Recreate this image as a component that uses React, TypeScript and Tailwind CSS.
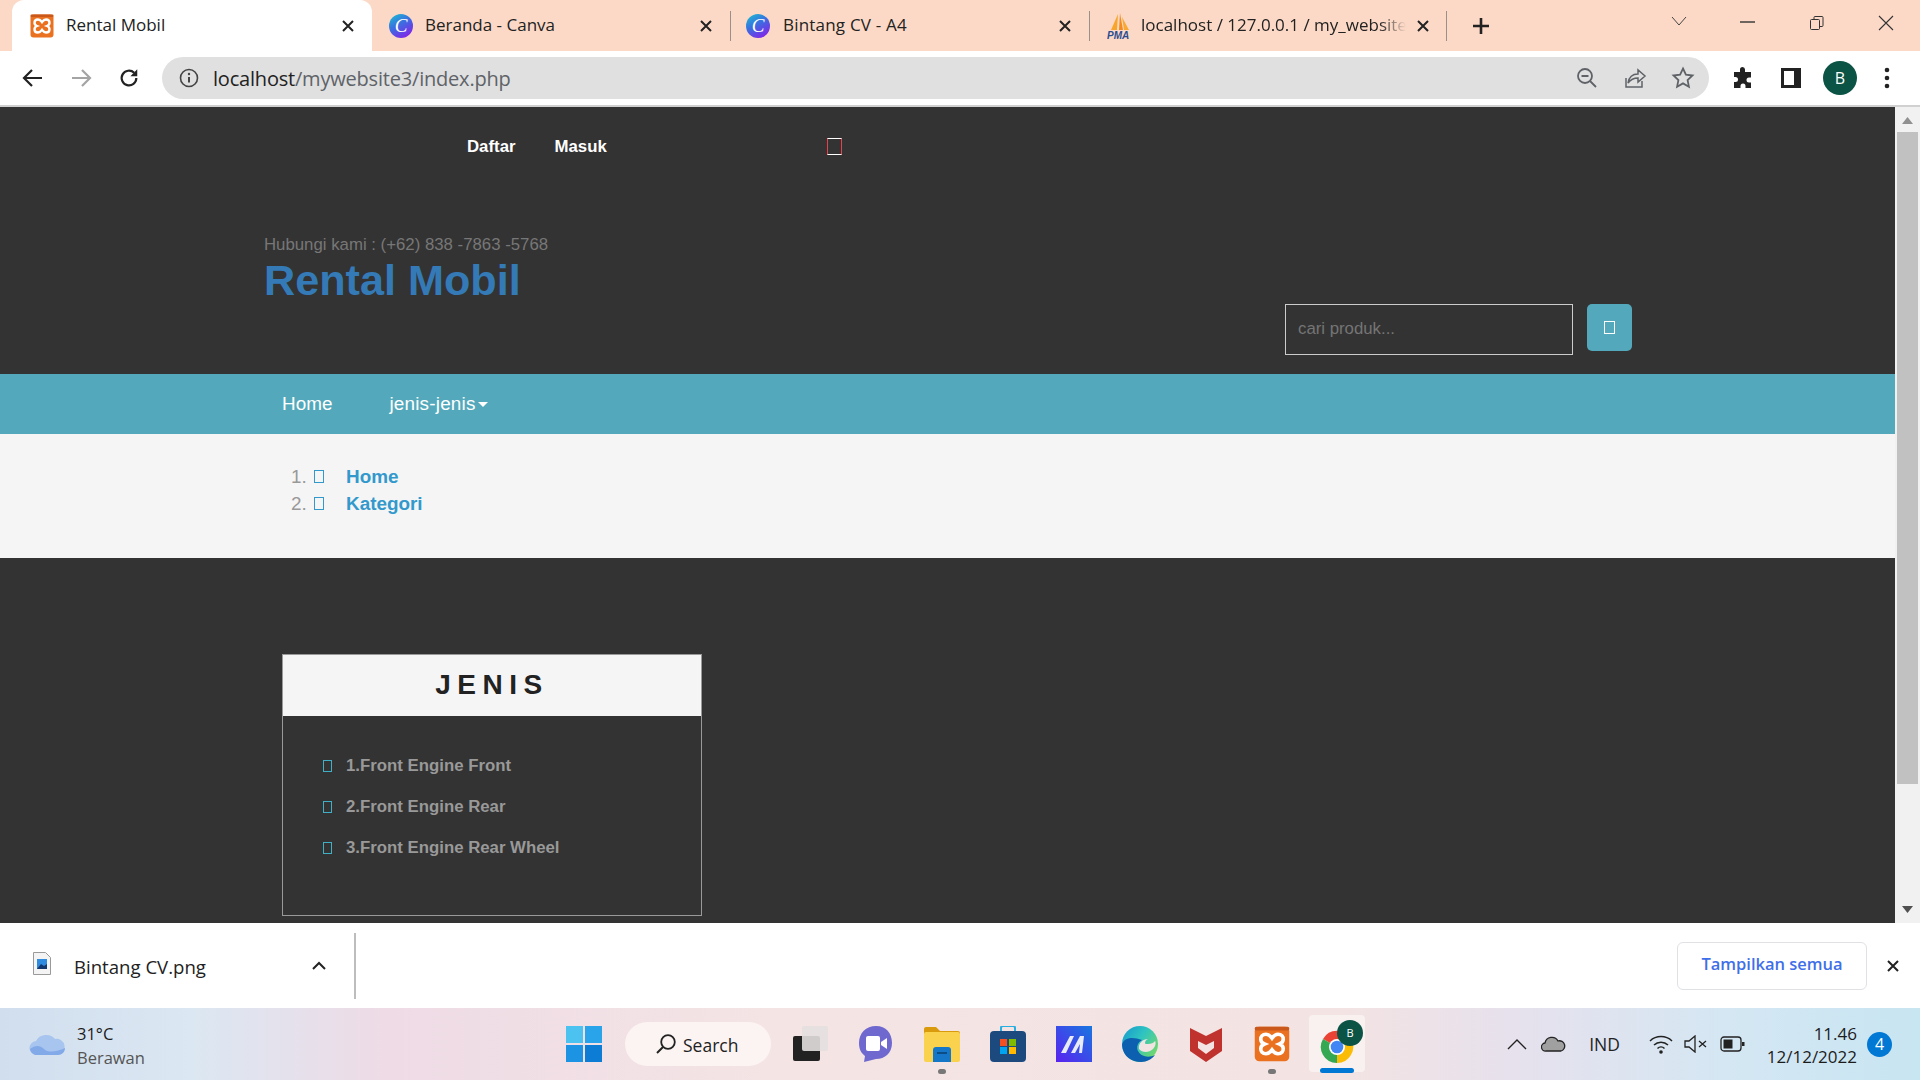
import React from "react";

const ui = "font-['Open_Sans','Noto_Sans',sans-serif]";

function Xampp({ size = 24 }: { size?: number }) {
  return (
    <svg width={size} height={size} viewBox="0 0 24 24" className="shrink-0">
      <rect x="0.5" y="0.5" width="23" height="23" rx="3" fill="#ea7120" />
      <rect x="0.5" y="0.5" width="23" height="2.5" rx="1" fill="#c9581a" />
      <path d="M8 5.5c2 0 3 1.2 4 2.6 1-1.4 2-2.6 4-2.6 2.4 0 3.5 1.6 3.5 3.3 0 1.500-1 2.600-2.500 3.200 1.500.6 2.500 1.700 2.500 3.200 0 1.700-1.100 3.300-3.500 3.300-2 0-3-1.200-4-2.600-1 1.400-2 2.600-4 2.600-2.400 0-3.500-1.600-3.500-3.300 0-1.500 1-2.600 2.500-3.200C5.500 11.400 4.500 10.300 4.500 8.800 4.500 7.100 5.600 5.500 8 5.500Z" fill="none" stroke="#fff" strokeWidth="2.400" />
    </svg>
  );
}

function Canva() {
  return (
    <svg width="24" height="24" viewBox="0 0 24 24" className="shrink-0">
      <defs>
        <linearGradient id="cv" x1="0" y1="0" x2="0.6" y2="1">
          <stop offset="0" stopColor="#19c4cf" />
          <stop offset="0.5" stopColor="#3a6fe0" />
          <stop offset="1" stopColor="#7d2ae8" />
        </linearGradient>
      </defs>
      <circle cx="12" cy="12" r="12" fill="url(#cv)" />
      <text x="12" y="18" textAnchor="middle" fill="#fff" fontSize="19" fontStyle="italic" fontFamily="'Liberation Serif',serif">C</text>
    </svg>
  );
}

function Pma() {
  return (
    <svg width="24" height="26" viewBox="0 0 24 26" className="shrink-0">
      <path d="M11 1 4 17h6Z" fill="#f8a52c" />
      <path d="M13 0 12 17h4Z" fill="#f28a1d" />
      <path d="M15 4 22 17h-5Z" fill="#f7a934" />
      <text x="0" y="26" fill="#2a4d8f" fontSize="10" fontWeight="700" fontStyle="italic" fontFamily="'Liberation Sans',sans-serif">PMA</text>
    </svg>
  );
}

function Close() {
  return (
    <svg width="14" height="14" viewBox="0 0 14 14" className="shrink-0">
      <path d="M2 2l10 10M12 2 2 12" stroke="#222" strokeWidth="2" fill="none" />
    </svg>
  );
}

function TabStrip() {
  const label = "flex-1 text-[17px] text-[#222] whitespace-nowrap -mt-[2px]";
  return (
    <div className={`${ui} h-[51px] bg-[#fcd9c6] flex items-start pl-[12px] shrink-0`}>
      <div className="w-[360px] h-[51px] bg-white rounded-t-[12px] flex items-center pl-[18px] pr-[17px] shrink-0">
        <Xampp />
        <span className={`ml-[12px] ${label}`}>Rental Mobil</span>
        <Close />
      </div>
      <div className="w-[359px] pl-[17px] flex items-center h-[51px] shrink-0">
        <Canva />
        <span className={`ml-[12px] ${label}`}>Beranda - Canva</span>
        <Close />
        <span className="w-[1px] h-[30px] bg-[#9a9088] ml-[17px]" />
      </div>
      <div className="w-[359px] pl-[15px] flex items-center h-[51px] shrink-0">
        <Canva />
        <span className={`ml-[13px] tracking-[0.2px] ${label}`}>Bintang CV - A4</span>
        <Close />
        <span className="w-[1px] h-[30px] bg-[#9a9088] ml-[17px]" />
      </div>
      <div className="w-[357px] pl-[17px] flex items-center h-[51px] shrink-0">
        <Pma />
        <span className="ml-[10px] w-[266px] overflow-hidden text-[17px] text-[#222] whitespace-nowrap -mt-[2px] [mask-image:linear-gradient(90deg,#000_90%,transparent)]">localhost / 127.0.0.1 / my_website</span>
        <span className="ml-[10px]"><Close /></span>
        <span className="w-[1px] h-[30px] bg-[#9a9088] ml-[16px]" />
      </div>
      <div className="h-[51px] flex items-center ml-[25px]">
        <svg width="18" height="18" viewBox="0 0 18 18"><path d="M9 1v16M1 9h16" stroke="#222" strokeWidth="2.600" /></svg>
      </div>
      <div className="h-[51px] flex items-start flex-1 pt-[15px] pl-[180px]">
        <svg width="18" height="12" viewBox="0 0 18 12"><path d="M2 2l7 8 7-8" stroke="#444" strokeWidth="1" fill="none" /></svg>
        <svg width="16" height="12" viewBox="0 0 16 12" className="ml-[52px] mt-[2px]"><path d="M0 5h15" stroke="#333" strokeWidth="1.400" /></svg>
        <svg width="16" height="16" viewBox="0 0 16 16" className="ml-[53px]"><path d="M2.500 4.500h7a1 1 0 0 1 1 1v8a1 1 0 0 1-1 1h-7a1 1 0 0 1-1-1v-8a1 1 0 0 1 1-1ZM5 4.500V2.500a1 1 0 0 1 1-1h7a1 1 0 0 1 1 1v8a1 1 0 0 1-1 1h-3" stroke="#333" fill="none" /></svg>
        <svg width="16" height="16" viewBox="0 0 16 16" className="ml-[53px]"><path d="M1 1l14 14M15 1 1 15" stroke="#333" strokeWidth="1.100" /></svg>
      </div>
    </div>
  );
}

function Toolbar() {
  return (
    <div className={`${ui} h-[54px] bg-white flex items-center shrink-0`}>
      <svg width="22" height="20" viewBox="0 0 22 20" className="ml-[22px] shrink-0"><path d="M20 10H3M10 2l-8 8 8 8" stroke="#222" strokeWidth="2.200" fill="none" /></svg>
      <svg width="22" height="20" viewBox="0 0 22 20" className="ml-[26px] shrink-0"><path d="M2 10h17M12 2l8 8-8 8" stroke="#a4a4a4" strokeWidth="2.200" fill="none" /></svg>
      <svg width="22" height="22" viewBox="0 0 24 24" className="ml-[26px] shrink-0"><path d="M20 12a8 8 0 1 1-2.400-5.700" stroke="#222" strokeWidth="2.400" fill="none" /><path d="M21 2.500v7.500h-7.500Z" fill="#222" /></svg>
      <div className="ml-[22px] w-[1547px] h-[42px] rounded-full bg-[#e0e0e0] flex items-center shrink-0">
        <svg width="20" height="20" viewBox="0 0 20 20" className="ml-[17px] shrink-0"><circle cx="10" cy="10" r="8.500" stroke="#444" strokeWidth="1.600" fill="none" /><path d="M10 9v5.500" stroke="#444" strokeWidth="2" /><circle cx="10" cy="6" r="1.200" fill="#444" /></svg>
        <span className="ml-[14px] mt-[1px] text-[20px] tracking-[-0.2px] text-[#222] whitespace-nowrap">localhost<span className="text-[#5f6368]">/mywebsite3/index.php</span></span>
        <div className="flex-1" />
        <svg width="22" height="22" viewBox="0 0 22 22" className="shrink-0"><circle cx="9" cy="9" r="7" stroke="#5f6368" strokeWidth="1.800" fill="none" /><path d="M5.500 9h7M14 14l6 6" stroke="#5f6368" strokeWidth="1.800" /></svg>
        <svg width="24" height="24" viewBox="0 0 24 24" className="ml-[25px] shrink-0"><path d="M3 12v9h16v-6M5 17c1-6 5-9 10-9V4l7 6-7 6v-4c-4 0-7 1-10 5Z" stroke="#5f6368" strokeWidth="1.500" fill="none" /></svg>
        <svg width="24" height="24" viewBox="0 0 24 24" className="ml-[24px] mr-[14px] shrink-0"><path d="M12 2.500l2.900 6.200 6.600.8-4.900 4.600 1.300 6.600-5.900-3.300-5.900 3.300 1.300-6.600-4.900-4.600 6.600-.8Z" stroke="#5f6368" strokeWidth="1.800" fill="none" /></svg>
      </div>
      <svg width="24" height="24" viewBox="0 0 24 24" className="ml-[22px] shrink-0"><path d="M9 3.500a2.500 2.500 0 0 1 5 0V6h6v5.500h-2a2.500 2.500 0 0 0 0 5h2V22h-5.500v-2a2.500 2.500 0 0 0-5 0v2H3v-6h1.500a2.500 2.500 0 0 0 0-5H3V6h6Z" fill="#222" /></svg>
      <span className="ml-[26px] w-[20px] h-[20px] border-[3px] border-[#222] border-r-[7px] shrink-0" />
      <span className="ml-[22px] w-[34px] h-[34px] rounded-full bg-[#0b5345] text-white text-[16px] flex items-center justify-center shrink-0">B</span>
      <svg width="6" height="22" viewBox="0 0 6 22" className="ml-[27px] shrink-0"><circle cx="3" cy="3" r="2.300" fill="#222" /><circle cx="3" cy="11" r="2.300" fill="#222" /><circle cx="3" cy="19" r="2.300" fill="#222" /></svg>
    </div>
  );
}

function Scrollbar() {
  return (
    <div className="w-[25px] shrink-0 bg-[#f1f1f1] flex flex-col items-center">
      <svg width="11" height="7" viewBox="0 0 11 7" className="mt-[10px] shrink-0"><path d="M5.500 0l5.500 7H0Z" fill="#909090" /></svg>
      <div className="w-[21px] h-[652px] bg-[#c1c1c1] mt-[8px] shrink-0" />
      <div className="flex-1" />
      <svg width="11" height="7" viewBox="0 0 11 7" className="mb-[10px] shrink-0"><path d="M5.500 7l5.500-7H0Z" fill="#505050" /></svg>
    </div>
  );
}

function Page() {
  return (
    <div className="h-[816px] flex shrink-0 overflow-hidden font-['Liberation_Sans',Arial,sans-serif]">
      <div className="flex-1 flex flex-col bg-[#333333] min-w-0">
        <div className="h-[267px] flex flex-col shrink-0">
          <div className="h-[78px] flex items-center pl-[467px] pt-[1px] shrink-0">
            <span className="text-[16.800px] font-bold text-white">Daftar</span>
            <span className="text-[16.800px] font-bold text-white ml-[39px]">Masuk</span>
            <span className="ml-[220px] w-[15px] h-[17px] border border-white border-x-[#e8414e]" />
          </div>
          <div className="flex justify-between pl-[264px] pr-[263px] pt-[48px]">
            <div>
              <div className="text-[16.800px] leading-[24px] text-[#777777]">Hubungi kami : (+62) 838 -7863 -5768</div>
              <div className="text-[43.200px] leading-[46px] font-bold text-[#337ab7]">Rental Mobil</div>
            </div>
            <div className="flex gap-[14px] mt-[71px] items-start">
              <div className="w-[288px] h-[51px] border border-[#cccccc] flex items-center pl-[12px] pb-[2px] text-[16.800px] text-[#757575]">cari produk...</div>
              <div className="w-[45px] h-[47px] rounded-[5px] bg-[#53a9bb] flex items-center justify-center">
                <span className="w-[11px] h-[13px] border border-white" />
              </div>
            </div>
          </div>
        </div>
        <div className="h-[60px] bg-[#53a9bb] flex items-center pl-[282px] text-white text-[18.900px] shrink-0">
          <span>Home</span>
          <span className="ml-[57px] tracking-[0.2px]">jenis-jenis</span>
          <span className="ml-[2px] w-0 h-0 border-x-[5px] border-x-transparent border-t-[5px] border-t-white" />
        </div>
        <div className="h-[124px] bg-[#f5f5f5] pt-[29px] shrink-0">
          <ol className="list-decimal pl-[312px] text-[18.900px] leading-[27px] text-[#999999]">
            <li><span className="inline-flex items-center"><span className="ml-[2px] w-[10px] h-[13px] border border-[#3399cc]" /><span className="ml-[22px] font-bold text-[#3399cc]">Home</span></span></li>
            <li><span className="inline-flex items-center"><span className="ml-[2px] w-[10px] h-[13px] border border-[#3399cc]" /><span className="ml-[22px] font-bold text-[#3399cc]">Kategori</span></span></li>
          </ol>
        </div>
        <div className="pl-[282px] pt-[96px]">
          <div className="w-[420px] h-[262px] border border-[#999999]">
            <div className="h-[61px] bg-[#f5f5f5] flex items-center justify-center pb-[2px] text-[28px] font-bold tracking-[6.500px] text-[#222222]">JENIS</div>
            <ul className="pt-[29px] pl-[40px]">
              {["1.Front Engine Front", "2.Front Engine Rear", "3.Front Engine Rear Wheel"].map((t) => (
                <li key={t} className="h-[41px] flex items-center">
                  <span className="w-[9px] h-[12px] border border-[#3fb0c6]" />
                  <span className="ml-[14px] text-[16.800px] font-bold text-[#999999]">{t}</span>
                </li>
              ))}
            </ul>
          </div>
        </div>
      </div>
      <Scrollbar />
    </div>
  );
}

function DownloadBar() {
  return (
    <div className={`${ui} h-[85px] bg-white flex items-center shrink-0`}>
      <svg width="18" height="23" viewBox="0 0 18 23" className="ml-[33px] shrink-0 -mt-[4px]"><path d="M.5.5h12l5 5v17H.5Z" fill="#f4f4f4" stroke="#9a9a9a" /><path d="M4 7h10v10H4Z" fill="#2f8be0" /><path d="M4 17l4-5 3 2 3-2v5Z" fill="#12366e" /></svg>
      <span className="ml-[23px] mt-[2px] text-[18.600px] text-[#222] whitespace-nowrap w-[238px]">Bintang CV.png</span>
      <svg width="14" height="9" viewBox="0 0 14 9" className="shrink-0"><path d="M1 8l6-6 6 6" stroke="#222" strokeWidth="2" fill="none" /></svg>
      <span className="ml-[28px] w-[2px] h-[66px] bg-[#bdbdbd] shrink-0" />
      <div className="flex-1" />
      <div className="w-[190px] h-[48px] border border-[#dfe1e5] rounded-[6px] flex items-center justify-center pb-[3px] text-[16.500px] font-semibold text-[#3f6fe8] shrink-0">Tampilkan semua</div>
      <div className="ml-[19px] mr-[20px]"><Close /></div>
    </div>
  );
}

function Chrome() {
  return (
    <svg width="38" height="38" viewBox="0 0 38 38" className="shrink-0">
      <path d="M19 19 5 11A16 16 0 0 1 33 11Z" fill="#ea4335" />
      <path d="M19 19 33 11A16 16 0 0 1 19 35Z" fill="#fbbc05" />
      <path d="M19 19 19 35A16 16 0 0 1 5 11Z" fill="#34a853" />
      <circle cx="19" cy="19" r="8" fill="#fff" />
      <circle cx="19" cy="19" r="6.300" fill="#4285f4" />
    </svg>
  );
}

function Taskbar() {
  const slot = "w-[66px] flex items-center justify-center shrink-0 relative h-[56px]";
  return (
    <div className={`${ui} h-[72px] flex items-center shrink-0 bg-[linear-gradient(90deg,#d1deee_0%,#dbe7f2_10%,#eedbe6_20%,#f4e4e4_40%,#f3e3e3_70%,#e6e1ed_79%,#d4e7f3_90%,#c8e5f2_100%)]`}>
      <svg width="37" height="24" viewBox="0 0 37 24" className="ml-[29px] shrink-0"><path d="M8 23a7 7 0 0 1-1-14 11 10 0 0 1 19-2 8 8 0 0 1 3 16Z" fill="#a7c5ef" /><path d="M1 17c5-4 10-4 14 0s13 3 21-1c0 4-3 7-7 7H8c-3 0-6-2-7-6Z" fill="#82a9e8" /></svg>
      <div className="ml-[11px] mt-[3px] w-[110px] shrink-0 text-[16.500px] leading-[24px]">
        <div className="text-[#1c1c1c]">31°C</div>
        <div className="text-[#555]">Berawan</div>
      </div>
      <div className="flex items-center ml-[379px] shrink-0">
        <svg width="36" height="36" viewBox="0 0 36 36" className="shrink-0"><rect width="17" height="17" fill="#4cc2f1" /><rect x="19" width="17" height="17" fill="#29a4ea" /><rect y="19" width="17" height="17" fill="#1d93e4" /><rect x="19" y="19" width="17" height="17" fill="#0c7cd5" /></svg>
        <div className="ml-[23px] w-[146px] h-[44px] rounded-full bg-[#fbf4f2] flex items-center pl-[30px] text-[17.500px] text-[#222] shrink-0">
          <svg width="22" height="22" viewBox="0 0 22 22" className="shrink-0"><circle cx="13" cy="9" r="6.800" stroke="#222" strokeWidth="1.800" fill="none" /><path d="M8 14l-6 6" stroke="#222" strokeWidth="2" /></svg>
          <span className="ml-[6px] mt-[2px]">Search</span>
        </div>
        <div className="ml-[6px] flex items-center shrink-0">
          <div className={slot}>
            <svg width="36" height="36" viewBox="0 0 36 36"><rect x="1" y="10" width="27" height="25" rx="2" fill="#222" /><rect x="10" y="0" width="26" height="25" rx="2" fill="#e4dfdf" opacity="0.9" /></svg>
          </div>
          <div className={slot}>
            <svg width="36" height="36" viewBox="0 0 36 36"><path d="M18 0c10 0 16 7 16 17s-7 16-16 16l-12 3 1-6C3 27 1 23 1 17 1 7 8 0 18 0Z" fill="#6f69cf" /><rect x="8" y="10" width="14" height="15" rx="2" fill="#fff" /><path d="M23 16l6-4v11l-6-4Z" fill="#fff" /></svg>
          </div>
          <div className={slot}>
            <svg width="38" height="36" viewBox="0 0 38 36"><path d="M1 3a2 2 0 0 1 2-2h10l4 4h18a2 2 0 0 1 2 2v6H1Z" fill="#d99a0c" /><rect x="1" y="6" width="36" height="30" rx="2" fill="#fad24e" /><path d="M10 36V24a3 3 0 0 1 3-3h12a3 3 0 0 1 3 3v12Z" fill="#1677c9" /><rect x="14" y="26" width="10" height="2" fill="#0d4d86" /></svg>
            <span className="absolute -bottom-[2px] left-1/2 -translate-x-1/2 w-[8px] h-[5px] rounded-full bg-[#777]" />
          </div>
          <div className={slot}>
            <svg width="36" height="36" viewBox="0 0 36 36"><path d="M11 6V2a2 2 0 0 1 2-2h10a2 2 0 0 1 2 2v4" stroke="#28aee0" strokeWidth="2" fill="none" /><rect y="5" width="36" height="31" rx="4" fill="#1c4a7f" /><rect x="10" y="13" width="7" height="7" fill="#f25022" /><rect x="19" y="13" width="7" height="7" fill="#7fba00" /><rect x="10" y="21" width="7" height="7" fill="#00a4ef" /><rect x="19" y="21" width="7" height="7" fill="#ffb900" /></svg>
          </div>
          <div className={slot}>
            <svg width="36" height="36" viewBox="0 0 36 36"><defs><linearGradient id="ma" x1="0" y1="1" x2="1" y2="0"><stop offset="0" stopColor="#5a22f0" /><stop offset="1" stopColor="#1877e0" /></linearGradient></defs><rect width="36" height="36" fill="url(#ma)" /><path d="M5 27 14 10h4L10 27ZM15 27l9-17h4l-2 17h-3l1-9-5 9Z" fill="#e8ecf8" /></svg>
          </div>
          <div className={slot}>
            <svg width="36" height="36" viewBox="0 0 36 36"><defs><linearGradient id="ed" x1="0" y1="0" x2="1" y2="0.700"><stop offset="0" stopColor="#1597d0" /><stop offset="0.500" stopColor="#2fc4c0" /><stop offset="1" stopColor="#72d86a" /></linearGradient></defs><circle cx="18" cy="18" r="18" fill="url(#ed)" /><path d="M0 19C1 31 10 36 19 36c6 0 11-3 14-7-6 3-14 2-17-4-2-4 0-9 4-11C10 10 1 12 0 19Z" fill="#0d5fb0" /><path d="M17 23c3 4 10 4 14 0 3-3 3-7 2-8-1 2-4 3-7 3-2 0-3 0-3-1 0-2 1-3 3-4-5 0-10 4-9 10Z" fill="#f3e3e3" /></svg>
          </div>
          <div className={slot}>
            <svg width="34" height="36" viewBox="0 0 34 36"><path d="M1 2l16 8 16-8v23L17 36 1 25Z" fill="#c0322d" /><path d="M9 15l8 4 8-4v7l-8 6-8-6Z" fill="#f3e3e3" /></svg>
          </div>
          <div className={slot}>
            <Xampp size={36} />
            <span className="absolute -bottom-[2px] left-1/2 -translate-x-1/2 w-[8px] h-[5px] rounded-full bg-[#777]" />
          </div>
          <div className={slot}>
            <div className="absolute -top-[1px] left-[4px] w-[56px] h-[57px] bg-[#f9f1f0] rounded-[4px]" />
            <span className="relative -ml-[2px] mt-[6px]"><Chrome /></span>
            <span className="absolute top-[4px] right-[8px] w-[26px] h-[26px] rounded-full bg-[#0b5345] text-white text-[11px] flex items-center justify-center">B</span>
            <span className="absolute bottom-[-1px] left-[15px] w-[34px] h-[5px] rounded-full bg-[#0078d4]" />
          </div>
        </div>
      </div>
      <div className="flex-1" />
      <svg width="20" height="12" viewBox="0 0 20 12" className="shrink-0"><path d="M1 11l9-9 9 9" stroke="#222" strokeWidth="1.400" fill="none" /></svg>
      <svg width="25" height="16" viewBox="0 0 25 16" className="ml-[14px] shrink-0"><path d="M5 15a4 4 0 0 1-1-8 7 7 0 0 1 13-2 5 5 0 0 1 3 10Z" fill="#a0a0a0" stroke="#222" strokeWidth="1.300" /></svg>
      <span className="ml-[23px] text-[17.500px] text-[#222] shrink-0">IND</span>
      <svg width="24" height="20" viewBox="0 0 24 20" className="ml-[29px] shrink-0"><path d="M1 7a16 16 0 0 1 22 0M5 11a10 10 0 0 1 14 0M8.500 14.500a5 5 0 0 1 7 0" stroke="#222" strokeWidth="1.500" fill="none" /><circle cx="12" cy="18" r="1.800" fill="#222" /></svg>
      <svg width="24" height="18" viewBox="0 0 24 18" className="ml-[11px] shrink-0"><path d="M1 6h4l6-5v16l-6-5H1Z" stroke="#222" strokeWidth="1.300" fill="none" /><path d="M15 6l7 6M22 6l-7 6" stroke="#222" strokeWidth="1.300" /></svg>
      <svg width="25" height="16" viewBox="0 0 25 16" className="ml-[12px] shrink-0"><rect x="1" y="1" width="20" height="14" rx="3" stroke="#222" strokeWidth="1.300" fill="none" /><rect x="3.500" y="3.500" width="9" height="9" fill="#222" /><rect x="22" y="6" width="2.500" height="4" fill="#222" /></svg>
      <div className="ml-[17px] mt-[1px] w-[95px] text-right text-[17px] leading-[23px] text-[#1c1c1c] shrink-0 whitespace-nowrap">
        <div>11.46</div>
        <div>12/12/2022</div>
      </div>
      <span className="ml-[10px] mr-[28px] w-[25px] h-[25px] rounded-full bg-[#0078d4] text-white text-[16px] flex items-center justify-center shrink-0">4</span>
    </div>
  );
}

export default function App() {
  return (
    <div className="w-[1920px] h-[1080px] overflow-hidden flex flex-col bg-white">
      <TabStrip />
      <Toolbar />
      <div className="h-[2px] bg-[#d0d0d0] shrink-0" />
      <Page />
      <DownloadBar />
      <Taskbar />
    </div>
  );
}
